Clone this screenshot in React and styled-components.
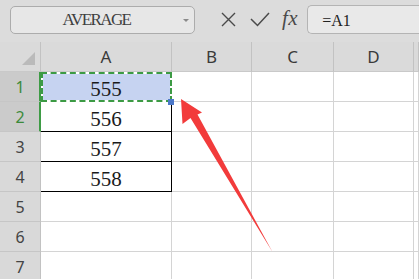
import React from 'react';
import styled, { createGlobalStyle } from 'styled-components';

const GlobalStyle = createGlobalStyle`
  html, body {
    margin: 0;
    padding: 0;
    background: #ffffff;
    overflow: hidden;
  }
  body {
    font-family: 'Liberation Serif', serif;
  }
`;

const COLS = ['A', 'B', 'C', 'D', ''];
const ROWS = 7;
const VALUES = { 1: '555', 2: '556', 3: '557', 4: '558' };

const Page = styled.div`
  position: relative;
  width: 419px;
  height: 279px;
  overflow: hidden;
  background: #ffffff;
`;

const Toolbar = styled.div`
  height: 42px;
  display: flex;
  align-items: flex-start;
  padding-top: 5px;
  box-sizing: border-box;
  background: #dcdcdc;
`;

const NameBox = styled.div`
  position: relative;
  margin: 1px 0 0 10px;
  width: 185px;
  height: 28px;
  box-sizing: border-box;
  border: 1px solid #acacac;
  border-radius: 5px;
  background: #e7e7e7;
  display: flex;
  align-items: center;
  justify-content: center;
  padding-right: 12px;
  font-family: 'Liberation Serif', serif;
  font-size: 17px;
  letter-spacing: -1.6px;
  color: #3f3f3f;
`;

const Caret = styled.span`
  position: absolute;
  right: 5px;
  top: 12px;
  width: 0;
  height: 0;
  border-left: 3px solid transparent;
  border-right: 3px solid transparent;
  border-top: 3px solid #8a8a8a;
`;

const IconGroup = styled.div`
  display: flex;
  align-items: center;
  height: 29px;
  margin-left: 26px;
  color: #4a4a4a;
`;

const IconSlot = styled.span`
  display: flex;
  align-items: center;
  margin-right: ${(props) => props.$gap || 0}px;
`;

const Fx = styled.span`
  font-family: 'Liberation Serif', serif;
  font-style: italic;
  font-size: 21px;
  color: #4a4a4a;
  letter-spacing: 0.5px;
  line-height: 1;
  margin-top: -3px;
`;

const FormulaInput = styled.div`
  flex: 1;
  height: 29px;
  box-sizing: border-box;
  border: 1px solid #b4b4b4;
  border-right: none;
  border-radius: 5px 0 0 5px;
  background: #e9e9e9;
  display: flex;
  align-items: center;
  padding: 2px 0 0 14px;
  font-family: 'Liberation Serif', serif;
  font-size: 16px;
  color: #222;
`;

const Sheet = styled.div`
  display: grid;
  grid-template-columns: 41px 131px 80px 82px 80px 1fr;
  grid-auto-rows: 30px;
`;

const ColHeader = styled.div`
  box-sizing: border-box;
  background: #dadada;
  border-right: 1px solid #c2c2c2;
  border-bottom: 1px solid #c9c9c9;
  display: flex;
  align-items: center;
  justify-content: center;
  font-family: 'Noto Sans', sans-serif;
  font-size: 17px;
  color: #3a3a3a;
`;

const Corner = styled(ColHeader)`
  align-items: flex-end;
  justify-content: flex-end;
  padding: 0 5px 6px 0;
`;

const CornerMark = styled.span`
  width: 0;
  height: 0;
  border-left: 13px solid transparent;
  border-bottom: 13px solid #bababa;
`;

const RowHeader = styled.div`
  box-sizing: border-box;
  background: ${(props) => (props.$active ? '#cbcbcb' : '#d9d9d9')};
  border-right: ${(props) =>
    props.$active ? '2px solid #3e9b45' : '1px solid #c2c2c2'};
  border-bottom: 1px solid #c6c6c6;
  display: flex;
  align-items: center;
  justify-content: center;
  padding-left: ${(props) => (props.$active ? 1 : 0)}px;
  font-family: 'Noto Sans', sans-serif;
  font-size: 16px;
  color: ${(props) => (props.$active ? '#3b8a3b' : '#444')};
`;

const Cell = styled.div`
  position: relative;
  box-sizing: border-box;
  border-right: 1px solid ${(props) => (props.$boxed ? '#000' : '#d4d4d4')};
  border-bottom: 1px solid ${(props) => (props.$boxed ? '#000' : '#d4d4d4')};
  background: ${(props) => (props.$selected ? '#c6d3f1' : '#ffffff')};
  display: flex;
  align-items: center;
  justify-content: center;
  font-family: 'Liberation Serif', serif;
  font-size: 21px;
  color: #1a1a1a;
  padding-top: 5px;

  ${(props) =>
    props.$selected &&
    `
    &::before, &::after {
      content: '';
      position: absolute;
      left: 0;
      top: 0;
      right: -1px;
      bottom: -1px;
      box-sizing: border-box;
      border: 2px solid #ffffff;
    }
    &::after {
      border: 2px dashed #3c9a44;
    }
  `}
`;

const FillHandle = styled.span`
  position: absolute;
  right: -3px;
  bottom: -4px;
  width: 6px;
  height: 6px;
  background: #4b78c9;
  z-index: 2;
`;

const Overlay = styled.svg`
  position: absolute;
  left: 0;
  top: 0;
  pointer-events: none;
`;

const CloseIcon = () => (
  <svg width='15' height='15' viewBox='0 0 15 15'>
    <path d='M1 1 L14 14 M14 1 L1 14' stroke='#4a4a4a' strokeWidth='1.4' fill='none' />
  </svg>
);

const CheckIcon = () => (
  <svg width='20' height='15' viewBox='0 0 20 15'>
    <path d='M1 7 L7.5 13.5 L19 1' stroke='#4a4a4a' strokeWidth='1.5' fill='none' />
  </svg>
);

const App = () => {
  const rows = Array.from({ length: ROWS }, (_, i) => i + 1);

  return (
    <Page>
      <GlobalStyle />
      <Toolbar>
        <NameBox>
          AVERAGE
          <Caret />
        </NameBox>
        <IconGroup>
          <IconSlot $gap={14}>
            <CloseIcon />
          </IconSlot>
          <IconSlot $gap={12}>
            <CheckIcon />
          </IconSlot>
          <IconSlot $gap={9}>
            <Fx>fx</Fx>
          </IconSlot>
        </IconGroup>
        <FormulaInput>=A1</FormulaInput>
      </Toolbar>

      <Sheet>
        <Corner>
          <CornerMark />
        </Corner>
        {COLS.map((c, i) => (
          <ColHeader key={'h' + i}>{c}</ColHeader>
        ))}
        {rows.map((r) => (
          <React.Fragment key={r}>
            <RowHeader $active={r <= 2}>{r}</RowHeader>
            {COLS.map((c, i) => {
              const isA = i === 0;
              return (
                <Cell
                  key={c + r + i}
                  $selected={isA && r === 1}
                  $boxed={isA && r >= 2 && r <= 4}
                >
                  {isA ? VALUES[r] : null}
                  {isA && r === 1 ? <FillHandle /> : null}
                </Cell>
              );
            })}
          </React.Fragment>
        ))}
      </Sheet>

      <Overlay width='419' height='279' viewBox='0 0 419 279'>
        <polygon
          points='181,99 202,112.5 197.5,114.5 272.5,252 190.5,118 182.5,124'
          fill='#f23b3b'
        />
      </Overlay>
    </Page>
  );
};

export default App;
